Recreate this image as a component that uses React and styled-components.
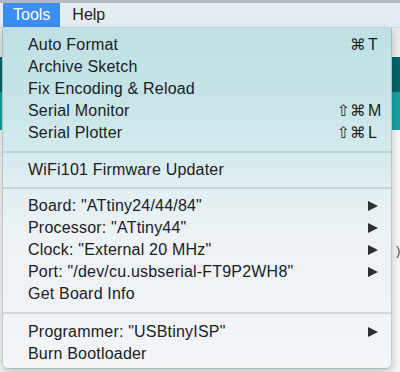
import React from "react";
import styled, { createGlobalStyle } from "styled-components";

const Global = createGlobalStyle`
  html, body { margin: 0; padding: 0; }
  body { width: 400px; height: 372px; overflow: hidden; background: #eef0f1; }
  * { box-sizing: border-box; }
`;

const Screen = styled.div`
  position: relative;
  width: 400px;
  height: 372px;
  overflow: hidden;
  display: flex;
  flex-direction: column;
  font-family: "Liberation Sans", Arial, sans-serif;
`;

const MenuBar = styled.div`
  height: 28px;
  flex: none;
  display: flex;
  align-items: stretch;
  gap: 2px;
  padding-left: 3px;
  border-top: 3px solid #b4bbc0;
  background: #e4ecf4;
  border-bottom: 1px solid #d2dbe2;
`;

const BarItem = styled.div`
  display: flex;
  align-items: center;
  padding: 0 10px;
  font-size: 16px;
  color: ${(p) => (p.$active ? "#ffffff" : "#1e2326")};
  background: ${(p) => (p.$active ? "#3b8ef5" : "transparent")};
`;

const Workspace = styled.div`
  flex: 1;
  display: flex;
  flex-direction: column;
`;

const Strip = styled.div`
  height: ${(p) => p.$h}px;
  flex: none;
  background: ${(p) => p.$bg};
`;

const Editor = styled.div`
  flex: 1;
  background: #f6f7f7;
  padding: 114px 0 0 394px;
  font-family: "Liberation Mono", monospace;
  font-size: 13px;
  color: #555;
`;

const Dropdown = styled.div`
  position: absolute;
  left: 2px;
  top: 28px;
  width: 390px;
  height: 341px;
  padding: 6px 0 4px;
  border-radius: 0 0 6px 6px;
  border: 1px solid rgba(120, 130, 135, 0.35);
  border-top: none;
  box-shadow: 0 3px 10px rgba(0, 0, 0, 0.22);
  background: linear-gradient(
    180deg,
    #bfe0e4 0%,
    #c6e4e7 20%,
    #d3eaed 36%,
    #e2eff2 48%,
    #ecf2f5 60%,
    #f0f3f6 80%,
    #f3f5f7 100%
  );
  display: flex;
  flex-direction: column;
`;

const Row = styled.div`
  height: 22px;
  flex: none;
  display: flex;
  align-items: center;
  padding: 0 7px 0 25px;
  font-size: 16px;
  letter-spacing: 0.2px;
  color: #1a2024;
`;

const Label = styled.span`
  flex: 1;
  white-space: nowrap;
`;

const Mods = styled.span`
  font-family: "DejaVu Sans", sans-serif;
  font-size: 15.5px;
  letter-spacing: 0.5px;
  color: #1a2024;
`;

const KeyCell = styled.span`
  width: 18px;
  padding-left: 2px;
  display: flex;
  align-items: center;
  font-family: "Liberation Sans", Arial, sans-serif;
  font-size: 16px;
`;

const Arrow = styled.span`
  width: 0;
  height: 0;
  border-top: 5.5px solid transparent;
  border-bottom: 5.5px solid transparent;
  border-left: 10px solid #2a2f33;
`;

const Sep = styled.div`
  height: ${(p) => p.$h}px;
  flex: none;
  display: flex;
  align-items: center;
  &::after {
    content: "";
    flex: 1;
    height: 2px;
    background: rgba(170, 185, 190, 0.45);
  }
`;

const Item = ({ label, mods, k, sub }) => (
  <Row>
    <Label>{label}</Label>
    {mods && <Mods>{mods}</Mods>}
    {(k || sub) && <KeyCell>{sub ? <Arrow /> : k}</KeyCell>}
  </Row>
);

export default function App() {
  return (
    <>
      <Global />
      <Screen>
        <MenuBar>
          <BarItem $active>Tools</BarItem>
          <BarItem>Help</BarItem>
        </MenuBar>
        <Workspace>
          <Strip $h={29} $bg="#e9eced" />
          <Strip $h={35} $bg="#006468" />
          <Strip $h={38} $bg="#17a1a5" />
          <Editor>)</Editor>
        </Workspace>
        <Dropdown>
          <Item label="Auto Format" mods="⌘" k="T" />
          <Item label="Archive Sketch" />
          <Item label="Fix Encoding & Reload" />
          <Item label="Serial Monitor" mods="⇧⌘" k="M" />
          <Item label="Serial Plotter" mods="⇧⌘" k="L" />
          <Sep $h={15} />
          <Item label="WiFi101 Firmware Updater" />
          <Sep $h={14} />
          <Item label={'Board: "ATtiny24/44/84"'} sub />
          <Item label={'Processor: "ATtiny44"'} sub />
          <Item label={'Clock: "External 20 MHz"'} sub />
          <Item label={'Port: "/dev/cu.usbserial-FT9P2WH8"'} sub />
          <Item label="Get Board Info" />
          <Sep $h={16} />
          <Item label={'Programmer: "USBtinyISP"'} sub />
          <Item label="Burn Bootloader" />
        </Dropdown>
      </Screen>
    </>
  );
}
